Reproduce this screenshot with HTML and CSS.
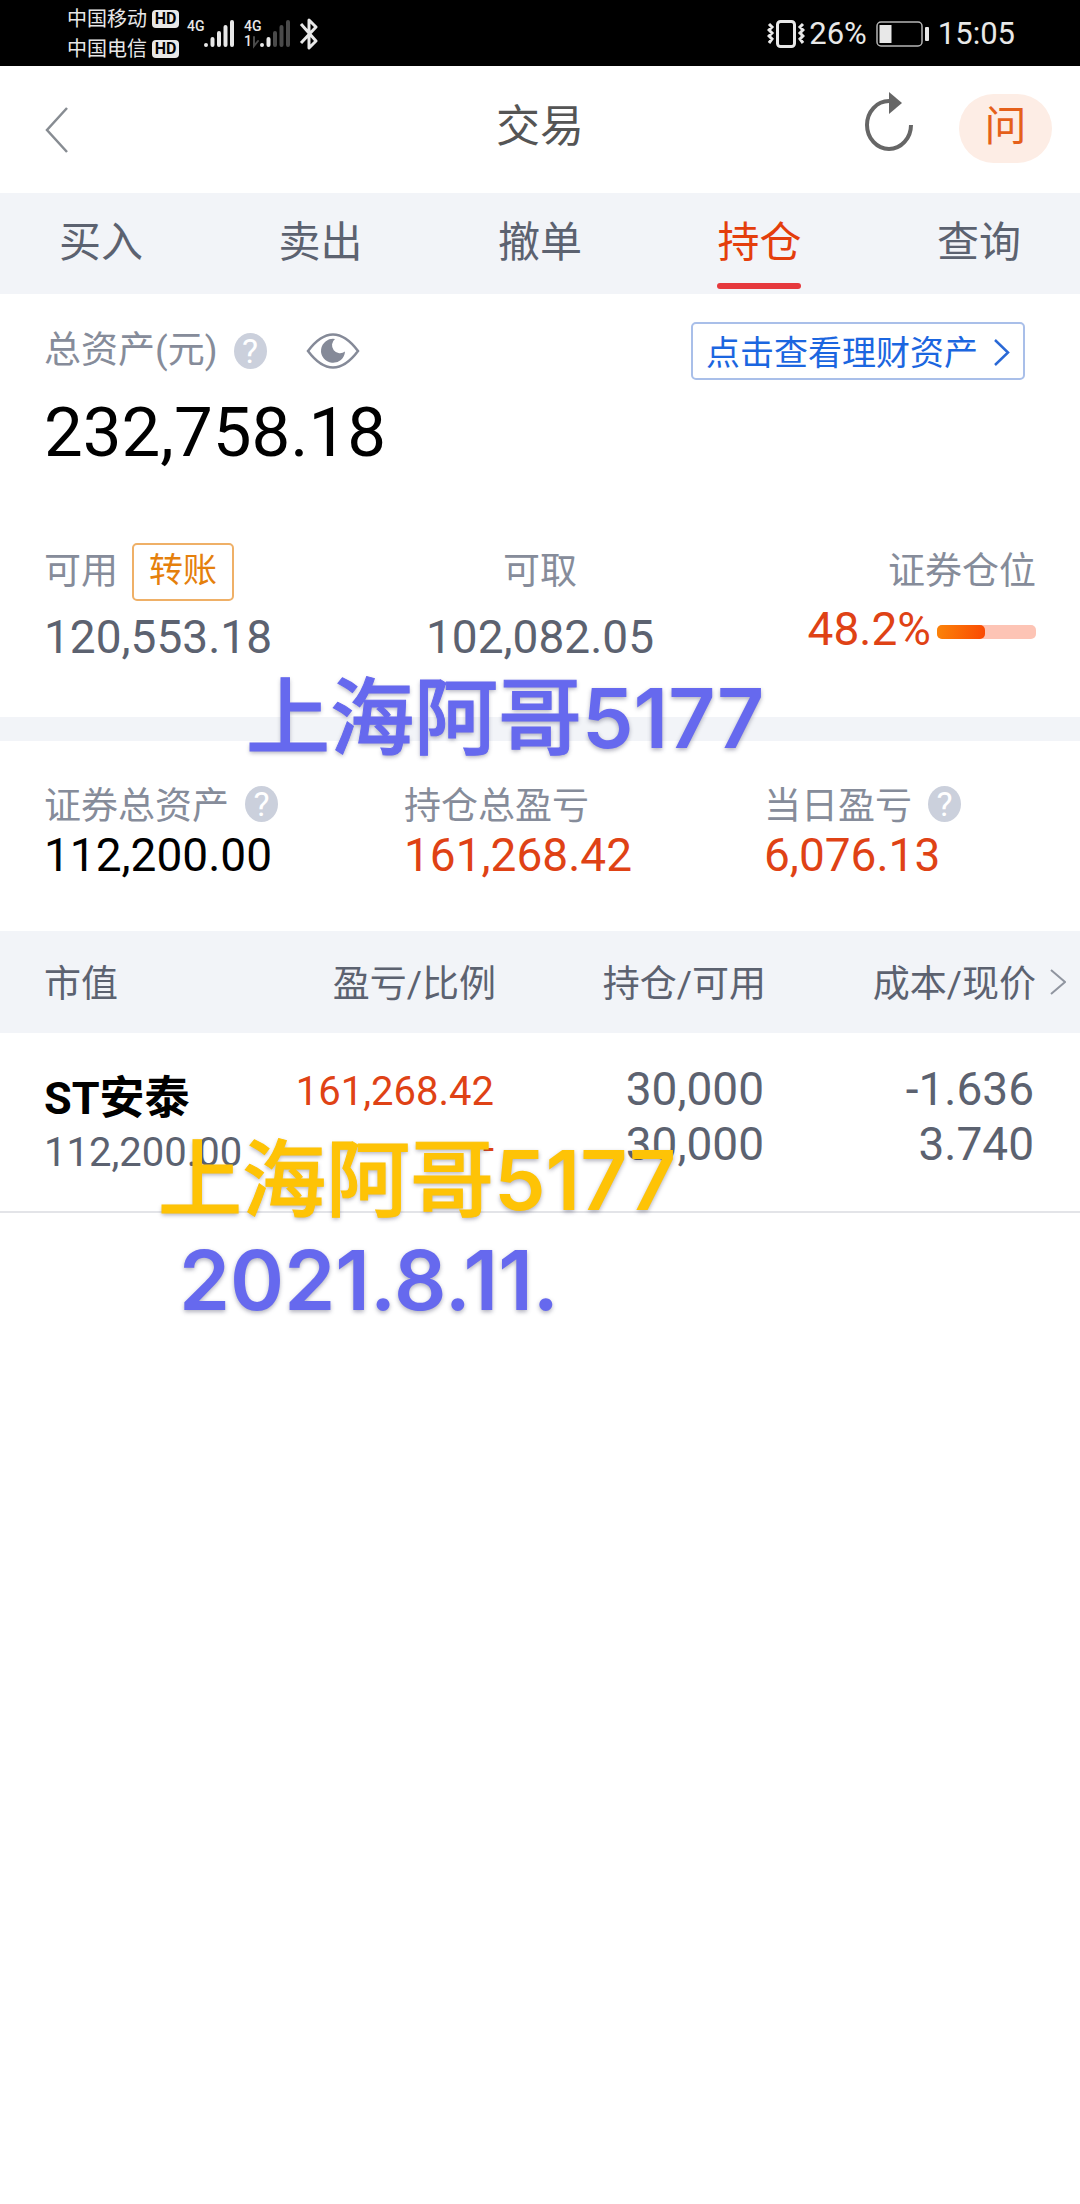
FILE: index.html
```html
<!DOCTYPE html>
<html lang="zh-CN">
<head>
<meta charset="utf-8">
<meta name="viewport" content="width=device-width, initial-scale=1">
<title>交易</title>
<link rel="stylesheet" href="styles.css">
</head>
<body>
<div class="app">
  <div class="status">
    <div class="carriers">
      <div class="carrier">中国移动<span class="hd">HD</span></div>
      <div class="carrier">中国电信<span class="hd">HD</span></div>
    </div>
    <div class="signal">
      <span class="net">4G</span>
      <svg class="bars" width="32" height="30" viewBox="0 0 32 30" stroke="#e8e8e8" stroke-width="4" stroke-linecap="round"><path d="M3 26v0M9.500 20v6M16 14v12M22.500 8v18M29 3v23"/></svg>
    </div>
    <div class="signal signal-second">
      <span class="net">4G<br>1</span>
      <svg class="bars" width="38" height="30" viewBox="0 0 38 30" stroke-width="4" stroke-linecap="round"><path stroke="#e8e8e8" d="M9 26v0M15.500 20v6"/><path stroke="#4a4a4a" d="M22 14v12M28.500 8v18M35 3v23"/><path stroke="#4a4a4a" stroke-width="2" fill="none" d="M1 18v9l4-5"/></svg>
    </div>
    <svg class="bluetooth" width="20" height="32" viewBox="0 0 20 32" fill="none" stroke="#e8e8e8" stroke-width="3" stroke-linejoin="round"><path d="M2 6l15 17-7 7V2l7 7L2 25"/></svg>
    <div class="status-right">
      <svg width="38" height="30" viewBox="0 0 38 30" fill="none" stroke="#e8e8e8"><rect x="10.500" y="2.500" width="17" height="25" rx="3" stroke-width="3"/><path stroke-width="3" d="M2 5l3 3-3 3 3 3-3 3 3 3-3 4M36 5l-3 3 3 3-3 3 3 3-3 3 3 4"/></svg>
      <span class="percent">26%</span>
      <svg class="battery" width="54" height="26" viewBox="0 0 54 26"><rect x="1" y="1" width="45" height="24" rx="4" fill="none" stroke="#b5b5b5" stroke-width="1.500"/><rect x="3.500" y="4" width="12" height="18" fill="#e8e8e8"/><rect x="49" y="6" width="4" height="14" rx="1" fill="#e8e8e8"/></svg>
      <span>15:05</span>
    </div>
  </div>

  <header class="header">
    <button class="icon-button back" aria-label="返回"><svg width="24" height="48" viewBox="0 0 24 48" fill="none" stroke="#878c92" stroke-width="2.500"><path d="M22 2L2 24l20 22"/></svg></button>
    <h1 class="title">交易</h1>
    <div class="actions">
      <button class="icon-button" aria-label="刷新"><svg class="refresh" width="50" height="62" viewBox="0 0 50 62"><path d="M46 34a22 24 0 1 1-22-24" fill="none" stroke="#666" stroke-width="4"/><path d="M24 1l13 11-13 11z" fill="#666"/></svg></button>
      <button class="ask">问</button>
    </div>
  </header>

  <nav class="tabs">
    <a class="tab" href="#buy">买入</a>
    <a class="tab" href="#sell">卖出</a>
    <a class="tab" href="#cancel">撤单</a>
    <a class="tab tab-active" href="#hold" aria-current="page">持仓</a>
    <a class="tab" href="#query">查询</a>
  </nav>

  <main>
    <section class="assets">
      <div class="assets-head">
        <span class="label">总资产(元)</span>
        <button class="help" aria-label="总资产说明">?</button>
        <button class="icon-button eye" aria-label="隐藏金额"><svg width="54" height="36" viewBox="0 0 54 36"><path d="M2 18C11 6 19 1.500 27 1.500S43 6 52 18C43 30 35 34.500 27 34.500S11 30 2 18z" fill="none" stroke="#858a98" stroke-width="2.500"/><path d="M29 6a8 8 0 0 0 10 12.500A12 12 0 1 1 29 6z" fill="#858a98"/></svg></button>
        <a class="wealth" href="#wealth">点击查看理财资产<svg width="17" height="27" viewBox="0 0 17 27" fill="none" stroke="#2a69d6" stroke-width="2.500"><path d="M2 1l13 12.500L2 26"/></svg></a>
      </div>
      <div class="total">232,758.18</div>
      <div class="balances">
        <div>
          <div class="balance-head"><span class="label">可用</span><button class="transfer">转账</button></div>
          <div class="figure">120,553.18</div>
        </div>
        <div class="balance-mid">
          <div class="balance-head"><span class="label">可取</span></div>
          <div class="figure">102,082.05</div>
        </div>
        <div class="balance-end">
          <div class="balance-head"><span class="label">证券仓位</span></div>
          <div class="position"><span class="up">48.2%</span><span class="meter"><span class="meter-fill" style="width:48.2%"></span></span></div>
        </div>
      </div>
    </section>

    <section class="summary">
      <div><div class="summary-head"><span class="label">证券总资产</span><button class="help" aria-label="证券总资产说明">?</button></div><div class="amount">112,200.00</div></div>
      <div><div class="summary-head"><span class="label">持仓总盈亏</span></div><div class="amount up">161,268.42</div></div>
      <div><div class="summary-head"><span class="label">当日盈亏</span><button class="help" aria-label="当日盈亏说明">?</button></div><div class="amount up">6,076.13</div></div>
    </section>

    <table class="holdings">
      <thead>
        <tr><th>市值</th><th>盈亏/比例</th><th>持仓/可用</th><th>成本/现价<svg class="more" width="16" height="26" viewBox="0 0 16 26" fill="none" stroke="#9095a0" stroke-width="2"><path d="M1 1l14 12L1 25"/></svg></th></tr>
      </thead>
      <tbody>
        <tr>
          <td class="stock"><div class="stock-name">ST安泰</div><div class="small">112,200.00</div></td>
          <td class="up"><div><span class="small">161,268.42</span></div><div><span class="small">-</span></div></td>
          <td><div>30,000</div><div>30,000</div></td>
          <td><div>-1.636</div><div>3.740</div></td>
        </tr>
      </tbody>
    </table>
  </main>

  <div class="mark mark-top">上海阿哥<span class="mark-digits">5177</span></div>
  <div class="mark mark-gold">上海阿哥<span class="mark-digits">5177</span></div>
  <div class="mark mark-date"><span class="mark-digits">2021.8.11.</span></div>
</div>
</body>
</html>
```
FILE: styles.css
```css
* {
  box-sizing: border-box;
}

body {
  margin: 0;
  background: #fff;
  color: #5c6270;
  font-family: Roboto, "Noto Sans CJK SC", sans-serif;
}

button {
  margin: 0;
  padding: 0;
  border: 0;
  background: none;
  font-family: inherit;
}

a {
  text-decoration: none;
}

svg {
  display: block;
  flex: none;
}

.app {
  position: relative;
  min-height: 100vh;
  overflow: hidden;
}

/* Phone status bar */
.status {
  display: flex;
  align-items: center;
  height: 66px;
  padding: 2px 65px 0 67px;
  background: #000;
  color: #e8e8e8;
}

.carrier {
  display: flex;
  align-items: center;
  gap: 5px;
  font-size: 20px;
  line-height: 30px;
}

.hd {
  width: 27px;
  border-radius: 4px;
  background: #e8e8e8;
  color: #000;
  font-size: 16px;
  font-weight: 700;
  line-height: 18px;
  text-align: center;
}

.signal {
  display: flex;
  align-items: flex-start;
  height: 30px;
  margin-left: 8px;
}

.signal-second {
  margin-left: 9px;
}

.signal-second .bars {
  margin-left: -7px;
}

.net {
  width: 16px;
  font-size: 14px;
  font-weight: 500;
  line-height: 15px;
}

.bluetooth {
  margin-left: 8px;
}

.status-right {
  display: flex;
  align-items: center;
  margin-left: auto;
  font-size: 31px;
  line-height: 36px;
}

.percent {
  margin: 0 9px 0 4px;
}

.battery {
  margin-right: 8px;
}

/* Page header */
.header {
  display: grid;
  grid-template-columns: 1fr auto 1fr;
  align-items: center;
  height: 127px;
  padding: 0 28px;
}

.icon-button {
  display: flex;
}

.back {
  margin-left: 17px;
}

.title {
  margin: 0;
  padding-bottom: 6px;
  font-size: 44px;
  font-weight: 400;
  line-height: 52px;
  color: #555;
}

.actions {
  display: flex;
  align-items: center;
  justify-content: flex-end;
  gap: 44px;
  padding-bottom: 3px;
}

.refresh {
  margin-bottom: 12px;
}

.ask {
  width: 93px;
  height: 69px;
  padding-bottom: 3px;
  border-radius: 35px;
  background: #fdede5;
  color: #e5601a;
  font-size: 42px;
  line-height: 48px;
}

.tabs {
  display: flex;
  justify-content: space-between;
  height: 101px;
  padding: 0 59px;
  background: #f2f4f8;
}

.tab {
  position: relative;
  color: #5c6270;
  font-size: 42px;
  line-height: 100px;
}

.tab-active {
  color: #e43e0c;
}

.tab-active::after {
  content: "";
  position: absolute;
  right: 0;
  bottom: 5px;
  left: 0;
  height: 6px;
  border-radius: 3px;
  background: #e6393d;
}

/* Account totals */
.label {
  color: #868c9a;
  font-size: 37px;
  line-height: 44px;
}

.up {
  color: #df4215;
}

.help {
  width: 33px;
  height: 36px;
  border-radius: 50%;
  background: #cbd0dc;
  color: #fff;
  font-size: 34px;
  line-height: 36px;
}

.assets {
  padding: 28px 44px 53px;
  border-bottom: 24px solid #f2f4f8;
}

.assets-head {
  display: flex;
  align-items: center;
  height: 58px;
}

.assets-head .help {
  margin-left: 16px;
}

.eye {
  margin-left: 39px;
}

.wealth {
  display: flex;
  align-items: center;
  gap: 15px;
  height: 58px;
  margin: 0 11px 0 auto;
  padding: 3px 13px 0;
  border: 2px solid #a9bfe9;
  border-radius: 5px;
  color: #1b66e0;
  font-size: 34px;
  line-height: 40px;
}

.total {
  margin-top: 13px;
  color: #000;
  font-size: 69px;
  line-height: 80px;
}

.balances {
  display: grid;
  grid-template-columns: 1fr auto 1fr;
  margin-top: 70px;
}

.balance-head {
  display: flex;
  align-items: center;
  gap: 14px;
  height: 58px;
}

.transfer {
  width: 102px;
  height: 58px;
  padding-bottom: 4px;
  border: 2px solid #efb067;
  border-radius: 5px;
  color: #e5800c;
  font-size: 34px;
  line-height: 40px;
}

.figure {
  margin-top: 9px;
  font-size: 46px;
  line-height: 54px;
}

.balance-mid .balance-head {
  justify-content: center;
}

.balance-end .balance-head {
  justify-content: flex-end;
}

.position {
  display: flex;
  align-items: center;
  justify-content: flex-end;
  gap: 6px;
  font-size: 46px;
  line-height: 56px;
}

.meter {
  width: 99px;
  height: 14px;
  margin-top: 6px;
  border-radius: 5px;
  background: #fdc4b5;
}

.meter-fill {
  display: block;
  height: 100%;
  border-radius: 5px;
  background: linear-gradient(100deg, #fb8409, #fa4903);
}

.summary {
  display: grid;
  grid-template-columns: repeat(3, 1fr);
  padding: 44px 0 49px;
}

.summary > div {
  padding-left: 44px;
}

.summary-head {
  display: flex;
  align-items: center;
  gap: 16px;
  height: 44px;
}

.summary-head .help {
  margin-bottom: 6px;
}

.amount {
  font-size: 46px;
  line-height: 53px;
}

.amount:not(.up) {
  color: #000;
}

/* Holdings list */
.holdings {
  width: 100%;
  border-collapse: collapse;
  table-layout: fixed;
}

.holdings th {
  position: relative;
  height: 102px;
  padding: 0 44px 3px 0;
  background: #f2f4f8;
  font-size: 37px;
  font-weight: 400;
  text-align: right;
  white-space: nowrap;
}

.holdings th:first-child {
  padding-left: 44px;
  text-align: left;
}

.more {
  position: absolute;
  top: 38px;
  right: 14px;
}

.holdings td {
  height: 179px;
  padding: 29px 46px 0 0;
  border-bottom: 2px solid #e3e4e8;
  font-size: 46px;
  line-height: 55px;
  text-align: right;
  vertical-align: top;
}

.holdings .stock {
  padding: 39px 0 0 44px;
  line-height: 54px;
  text-align: left;
}

.stock-name {
  color: #000;
  font-size: 45px;
  font-weight: 700;
}

.small {
  font-size: 40px;
}

/* Captions laid over the page */
.mark {
  position: absolute;
  color: #6669ee;
  font-family: Inter, "Noto Sans CJK SC", sans-serif;
  font-size: 84px;
  font-weight: 500;
  line-height: 100px;
  text-shadow: 0 2px 4px rgba(60, 60, 90, 0.4);
  white-space: nowrap;
  -webkit-text-stroke: 1px currentColor;
}

.mark-digits {
  font-size: 82px;
  font-weight: 600;
  -webkit-text-stroke: 0;
}

.mark-top {
  top: 668px;
  left: 246px;
}

.mark-gold {
  top: 1130px;
  left: 158px;
  color: #fec306;
}

.mark-date {
  top: 1230px;
  left: 179px;
}
```
